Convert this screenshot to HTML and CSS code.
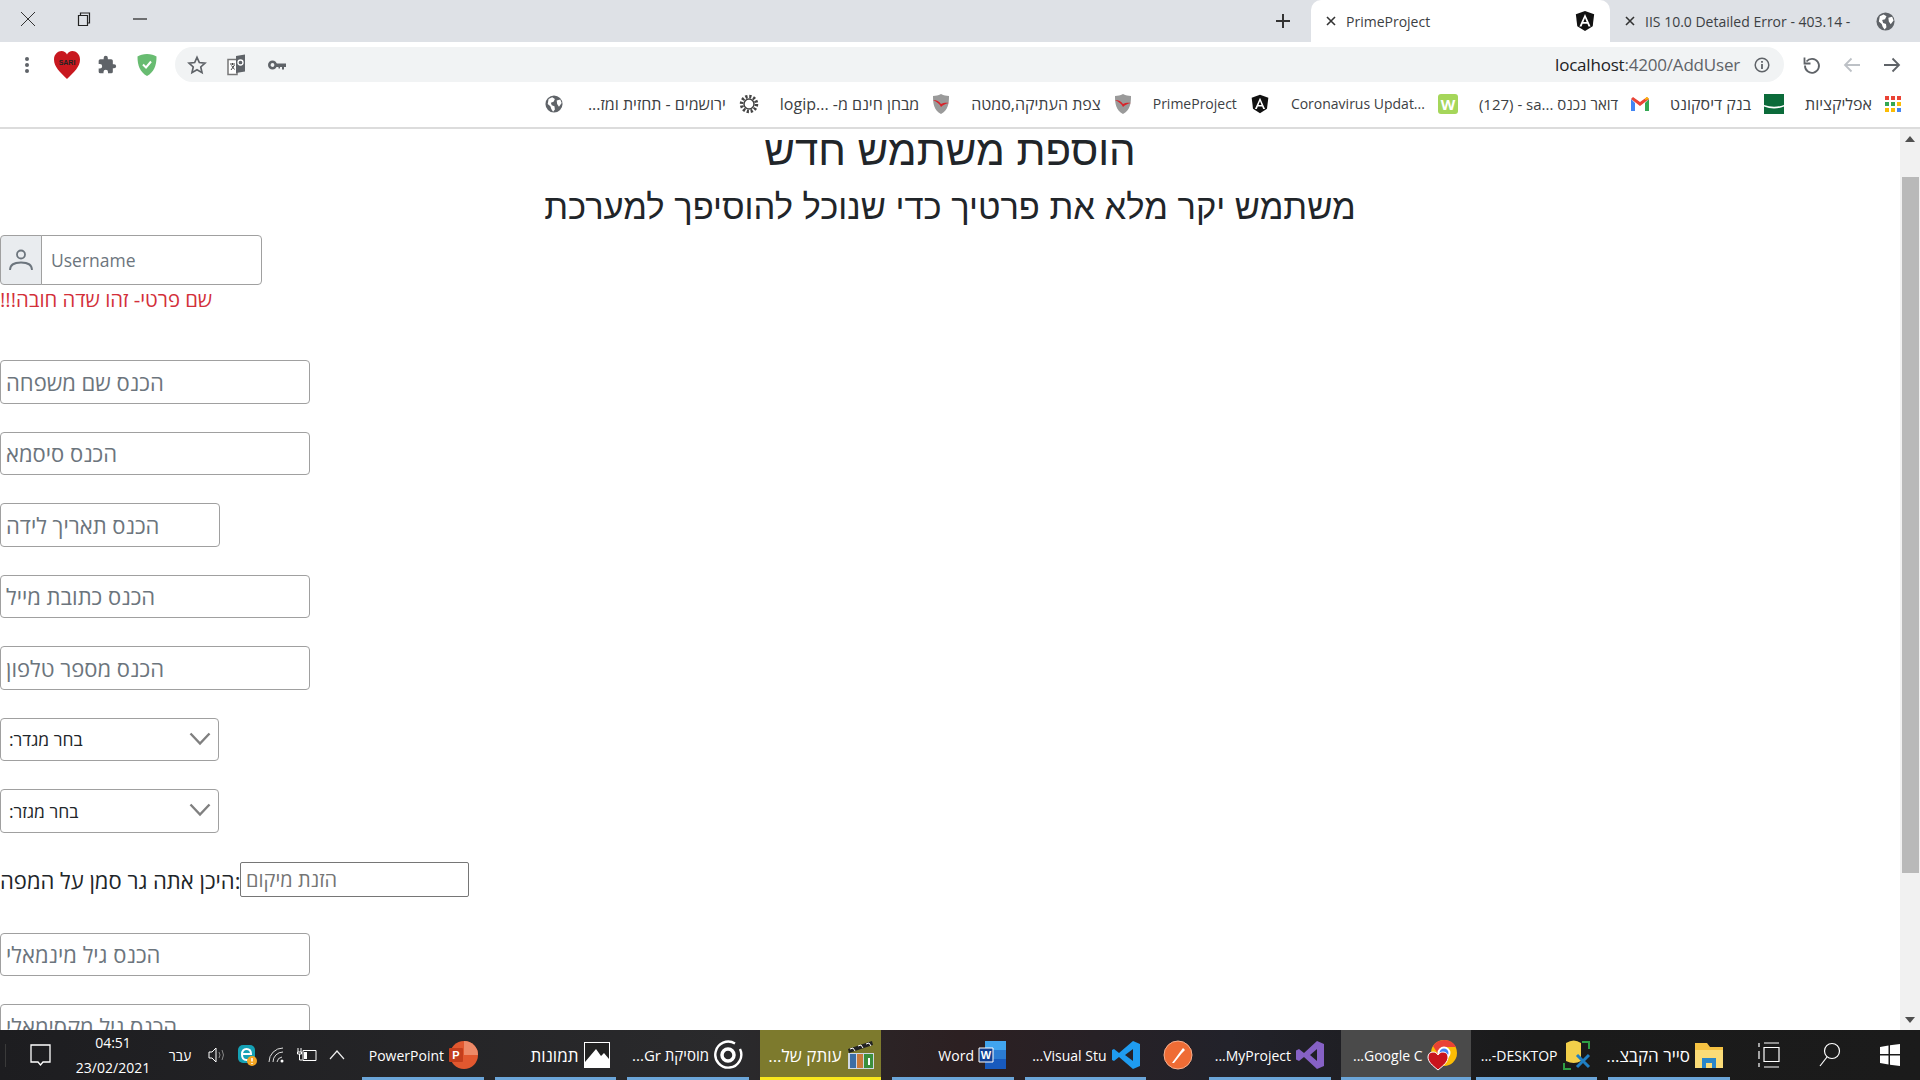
FILE: index.html
```html
<!DOCTYPE html>
<html lang="he">
<head>
<meta charset="utf-8">
<title>PrimeProject</title>
<link rel="stylesheet" href="styles.css">
</head>
<body>
<div class="screen">
  <header class="tabstrip">
    <div class="win-btn"><svg width="16" height="16" viewBox="0 0 16 16"><path d="M1 1l14 14M15 1L1 15" stroke="#333" stroke-width="1" fill="none"/></svg></div>
    <div class="win-btn"><svg width="14" height="16" viewBox="0 0 14 16"><path d="M1.5 4.5h9v10h-9zM3.5 4.5V2h9v10h-2" stroke="#222" stroke-width="1.2" fill="none"/></svg></div>
    <div class="win-btn"><svg width="14" height="2" viewBox="0 0 14 2"><path d="M0 1h14" stroke="#222" stroke-width="1.2"/></svg></div>
    <div class="strip-space"></div>
    <div class="new-tab"><svg width="16" height="16" viewBox="0 0 16 16"><path d="M8 1v14M1 8h14" stroke="#333" stroke-width="2"/></svg></div>
    <div class="tab tab-active">
      <svg class="tab-x" width="10" height="10" viewBox="0 0 10 10"><path d="M1 1l8 8M9 1L1 9" stroke="#333" stroke-width="1.6"/></svg>
      <span class="tab-title">PrimeProject</span>
      <svg class="ng" width="22" height="24" viewBox="0 0 24 24"><path d="M12 1L2 4.6l1.6 13.2L12 23l8.4-5.2L22 4.6z" fill="#111"/><path d="M12 4.4L5.9 18h2.3l1.2-3h5.2l1.2 3h2.3L12 4.4zm1.8 8.8h-3.6L12 8.8z" fill="#fff"/></svg>
    </div>
    <div class="tab tab-other">
      <svg class="tab-x" width="10" height="10" viewBox="0 0 10 10"><path d="M1 1l8 8M9 1L1 9" stroke="#333" stroke-width="1.6"/></svg>
      <span class="tab-title">IIS 10.0 Detailed Error - 403.14 -</span>
      <svg width="19" height="19" viewBox="0 0 20 20"><circle cx="10" cy="10" r="9.5" fill="#5f6368"/><path d="M4 4.5l4-2 3 2-1.500 3-3 1 1 3 3 1 .5 3.500-2 2.500-2-3-1-3-3-2.500zM13 6l4-1 1.500 4-3 4-2-3z" fill="#fff"/></svg>
    </div>
  </header>

  <div class="toolbar">
    <div class="tool"><svg width="6" height="18" viewBox="0 0 6 18"><g fill="#5f6368"><circle cx="3" cy="3" r="2"/><circle cx="3" cy="9" r="2"/><circle cx="3" cy="15" r="2"/></g></svg></div>
    <div class="tool"><svg width="28" height="30" viewBox="0 0 28 30"><path d="M14 29C7 22 1 17 1 9.500 1 4 5 1 8.500 1 11 1 13 2.500 14 4.500 15 2.500 17 1 19.500 1 23 1 27 4 27 9.500 27 17 21 22 14 29z" fill="#c8181f"/><text x="14" y="15" class="heart-txt">SARI</text></svg></div>
    <div class="tool"><svg width="20" height="20" viewBox="0 0 24 24"><path fill="#5f6368" d="M20.500 11H19V7a2 2 0 0 0-2-2h-4V3.500a2.500 2.500 0 0 0-5 0V5H4a2 2 0 0 0-2 2v3.800h1.500a2.700 2.700 0 0 1 0 5.400H2V20a2 2 0 0 0 2 2h3.800v-1.500a2.700 2.700 0 0 1 5.400 0V22H17a2 2 0 0 0 2-2v-4h1.500a2.500 2.500 0 0 0 0-5z"/></svg></div>
    <div class="tool"><svg width="20" height="24" viewBox="0 0 20 24"><path d="M10 1C6 1 3 2 .5 3.500.5 13 3 19 10 23c7-4 9.500-10 9.500-19.500C17 2 14 1 10 1z" fill="#68bc71"/><path d="M6 11.500l3 3 5-6" stroke="#fff" stroke-width="2" fill="none"/></svg></div>
    <div class="omnibox">
      <div class="tool"><svg width="20" height="20" viewBox="0 0 24 24"><path d="M12 2.800l2.800 6.300 6.800.7-5.100 4.600 1.500 6.800-6-3.500-6 3.500 1.500-6.800-5.100-4.600 6.800-.7z" fill="none" stroke="#5f6368" stroke-width="2"/></svg></div>
      <div class="tool"><svg width="20" height="22" viewBox="0 0 20 22"><path d="M1 5.500h9v15H1z" fill="#fff" stroke="#777" stroke-width="1.500"/><path d="M9 2l9-1.500v17L9 19z" fill="#5f6368"/><circle cx="13.500" cy="8.500" r="2.500" fill="none" stroke="#fff" stroke-width="1.300"/><path d="M3 10h5M5.500 9v2M7.500 11l-3.500 5M4.500 11.500l3 4" stroke="#444" stroke-width="1" fill="none"/></svg></div>
      <div class="tool"><svg width="18" height="10" viewBox="0 0 18 10"><circle cx="4.500" cy="5" r="3.200" fill="none" stroke="#5f6368" stroke-width="2.600"/><path d="M8 3.500h10v3.500h-2v2.500h-2V7h-2v1.500h-1.500V7H8z" fill="#5f6368"/></svg></div>
      <div class="omni-space"></div>
      <span class="url"><span class="url-host">localhost</span>:4200/AddUser</span>
      <div class="info"><svg width="16" height="16" viewBox="0 0 16 16"><circle cx="8" cy="8" r="6.800" fill="none" stroke="#5f6368" stroke-width="1.500"/><path d="M8 7v5M8 4v1.700" stroke="#5f6368" stroke-width="1.800"/></svg></div>
    </div>
    <div class="tool"><svg width="20" height="20" viewBox="0 0 20 20"><path d="M4.500 6.500A7 7 0 1 1 3 10.500" fill="none" stroke="#5f6368" stroke-width="1.800"/><path d="M2.500 2.500v6h6" fill="none" stroke="#5f6368" stroke-width="1.800"/></svg></div>
    <div class="tool"><svg width="18" height="16" viewBox="0 0 18 16"><path d="M17 8H2M8.500 1.500L2 8l6.500 6.500" fill="none" stroke="#bdc1c6" stroke-width="1.800"/></svg></div>
    <div class="tool"><svg width="18" height="16" viewBox="0 0 18 16"><path d="M1 8h15M9.500 1.500L16 8l-6.500 6.500" fill="none" stroke="#5f6368" stroke-width="1.800"/></svg></div>
  </div>

  <nav class="bookmarks">
    <div class="bm bm-globe"><svg width="18" height="18" viewBox="0 0 20 20"><circle cx="10" cy="10" r="9.5" fill="#5f6368"/><path d="M4 4.500l4-2 3 2-1.500 3-3 1 1 3 3 1 .5 3.500-2 2.500-2-3-1-3-3-2.500zM13 6l4-1 1.500 4-3 4-2-3z" fill="#fff"/></svg></div>
    <div class="bm"><span class="bm-text bm-he" dir="rtl">ירושמים - תחזית ומז...</span><svg width="20" height="20" viewBox="0 0 20 20"><circle cx="10" cy="10" r="5" fill="none" stroke="#444" stroke-width="1.500"/><circle cx="10" cy="10" r="7.500" fill="none" stroke="#444" stroke-width="3.500" stroke-dasharray="2.200 1.730"/></svg></div>
    <div class="bm"><span class="bm-text bm-he" dir="rtl">מבחן חינם מ- ...logip</span><svg width="18" height="22" viewBox="0 0 18 22"><path d="M9 1c3 1.500 5 1.500 8 2 0 8-1 14-8 18C2 17 1 11 1 3c3-.5 5-.5 8-2z" fill="#9a9a9a"/><path d="M1 7c4 0 6 1.500 8 4 2-1 5-1.500 8-1-3 .500-6 2-8 4-1-3-4-5-8-7z" fill="#d8232a"/></svg></div>
    <div class="bm"><span class="bm-text bm-he" dir="rtl">צפת העתיקה,סמטה</span><svg width="18" height="22" viewBox="0 0 18 22"><path d="M9 1c3 1.500 5 1.500 8 2 0 8-1 14-8 18C2 17 1 11 1 3c3-.5 5-.5 8-2z" fill="#9a9a9a"/><path d="M1 7c4 0 6 1.500 8 4 2-1 5-1.500 8-1-3 .500-6 2-8 4-1-3-4-5-8-7z" fill="#d8232a"/></svg></div>
    <div class="bm"><span class="bm-text">PrimeProject</span><svg width="20" height="22" viewBox="0 0 24 24"><path d="M12 1L2 4.600l1.600 13.200L12 23l8.400-5.200L22 4.600z" fill="#111"/><path d="M12 4.400L5.900 18h2.300l1.200-3h5.200l1.200 3h2.300L12 4.400zm1.800 8.800h-3.600L12 8.800z" fill="#fff"/></svg></div>
    <div class="bm"><span class="bm-text">Coronavirus Updat...</span><span class="bm-w">W</span></div>
    <div class="bm"><span class="bm-text bm-mixed">(127) - sa... דואר נכנס</span><svg width="18" height="14" viewBox="0 0 18 14"><path d="M0 2v12h4V6z" fill="#4285f4"/><path d="M14 6v8h4V2z" fill="#34a853"/><path d="M0 2l9 7 9-7-2-2-7 5-7-5z" fill="#ea4335"/><path d="M14 3l4-1-2-2-2 1.500z" fill="#fbbc05"/></svg></div>
    <div class="bm"><span class="bm-text bm-he" dir="rtl">בנק דיסקונט</span><svg width="20" height="20" viewBox="0 0 20 20"><path d="M0 0h20v20H0z" fill="#0b6b3a"/><path d="M0 11q10 3.500 20 0v1.500q-10 4-20 0z" fill="#fff"/></svg></div>
    <div class="bm"><span class="bm-text bm-he" dir="rtl">אפליקציות</span><svg width="16" height="16" viewBox="0 0 16 16"><path fill="#ea4335" d="M0 0h4v4H0zM6 0h4v4H6zM12 0h4v4h-4z"/><path fill="#fbbc05" d="M12 6h4v4h-4zM0 12h4v4H0zM6 12h4v4H6z"/><path fill="#34a853" d="M0 6h4v4H0zM6 6h4v4H6z"/><path fill="#4285f4" d="M12 12h4v4h-4z"/></svg></div>
  </nav>

  <div class="viewport">
    <main class="page">
      <h1 class="page-title">הוספת משתמש חדש</h1>
      <h2 class="page-sub">משתמש יקר מלא את פרטיך כדי שנוכל להוסיפך למערכת</h2>
      <form class="form">
        <div class="first-block">
          <div class="input-group">
            <span class="group-icon"><svg width="24" height="24" viewBox="0 0 24 24"><circle cx="12" cy="6.500" r="4" fill="none" stroke="#6c757d" stroke-width="1.800"/><path d="M1 22c0-5.500 5-7.500 11-7.500S23 16.500 23 22" fill="none" stroke="#6c757d" stroke-width="1.800"/></svg></span>
            <input class="group-input" type="text" placeholder="Username">
          </div>
          <div class="error">שם פרטי- זהו שדה חובה!!!</div>
        </div>
        <input class="control" type="text" placeholder="הכנס שם משפחה">
        <input class="control" type="text" placeholder="הכנס סיסמא">
        <input class="control control-short" type="text" placeholder="הכנס תאריך לידה">
        <input class="control" type="text" placeholder="הכנס כתובת מייל">
        <input class="control" type="text" placeholder="הכנס מספר טלפון">
        <div class="select-wrap">
          <select class="select"><option>בחר מגדר:</option></select>
          <svg class="chevron" width="22" height="14" viewBox="0 0 22 14"><path d="M1.500 1.500L11 11.500l9.500-10" fill="none" stroke="#808080" stroke-width="2.400"/></svg>
        </div>
        <div class="select-wrap">
          <select class="select"><option>בחר מגזר:</option></select>
          <svg class="chevron" width="22" height="14" viewBox="0 0 22 14"><path d="M1.500 1.500L11 11.500l9.500-10" fill="none" stroke="#808080" stroke-width="2.400"/></svg>
        </div>
        <div class="location-row">
          <label class="location-label">היכן אתה גר סמן על המפה:</label>
          <input class="location" type="text" placeholder="הזנת מיקום">
        </div>
        <input class="control" type="text" placeholder="הכנס גיל מינמאלי">
        <input class="control" type="text" placeholder="הכנס גיל מקסימאלי">
      </form>
    </main>
    <aside class="scrollbar">
      <svg class="arrow" width="10" height="6" viewBox="0 0 10 6"><path d="M5 0l5 6H0z" fill="#505050"/></svg>
      <div class="thumb"></div>
      <svg class="arrow" width="10" height="6" viewBox="0 0 10 6"><path d="M5 6l5-6H0z" fill="#505050"/></svg>
    </aside>
  </div>

  <footer class="taskbar">
    <div class="tray">
      <div class="notify"><svg width="21" height="23" viewBox="0 0 21 23"><path d="M1 1h19v17h-7l-2.500 3-2.500-3H1z" fill="none" stroke="#fff" stroke-width="1.300"/></svg></div>
      <div class="clock"><span>04:51</span><span>23/02/2021</span></div>
      <div class="lang">עבר</div>
      <div class="tray-icons">
        <svg width="20" height="20" viewBox="0 0 20 20"><path d="M2 7h3l4-4v14l-4-4H2z" fill="none" stroke="#fff"/><path d="M12 7q2 3 0 6M15 5q3 5 0 10" fill="none" stroke="#888"/></svg>
        <svg width="20" height="22" viewBox="0 0 20 22"><rect x="1" y="1" width="17" height="18" rx="5" fill="#15a1b5"/><path d="M5 10h9q0-5-4.500-5T5 10.500 9.500 16 14 14" fill="none" stroke="#fff" stroke-width="2"/><circle cx="15" cy="17" r="5" fill="#f5a623"/><path d="M15 14v3.500M15 19v1" stroke="#fff" stroke-width="1.500"/></svg>
        <svg width="20" height="18" viewBox="0 0 20 18"><path d="M2 16A14 14 0 0 1 16 2M6 16a10 10 0 0 1 10-10M10 16a6 6 0 0 1 5-5" fill="none" stroke="#ddd"/><circle cx="15" cy="15" r="1.500" fill="#fff"/></svg>
        <svg width="20" height="16" viewBox="0 0 20 16"><path d="M6 3.500h13v10H6z" fill="none" stroke="#fff"/><path d="M1 1v4M4 1v4M.500 5h4v2h-4zM2.500 7v6h3" stroke="#fff" fill="none"/><path d="M7 5h3v7H7z" fill="#fff"/></svg>
        <svg width="20" height="12" viewBox="0 0 20 12"><path d="M3 10l7-8 7 8" fill="none" stroke="#eee" stroke-width="1.200"/></svg>
      </div>
    </div>
    <div class="task-list">
      <div class="task open"><span>PowerPoint</span><svg width="30" height="30" viewBox="0 0 30 30"><circle cx="16" cy="15" r="14" fill="#e2582f"/><path d="M16 1a14 14 0 0 1 14 14H16z" fill="#ee8a68"/><rect x="1" y="8" width="14" height="14" rx="1" fill="#c43e1c"/><text x="8" y="19" class="ico-letter">P</text></svg></div>
      <div class="task open"><span class="task-he">תמונות</span><svg width="28" height="28" viewBox="0 0 28 28"><path d="M1 1h26v26H1z" fill="#fff"/><path d="M2 2h24v16l-5-6-3 3-5-7-11 13z" fill="#222"/></svg></div>
      <div class="task open"><span class="task-mixed">...Gr מוסיקת</span><svg width="30" height="30" viewBox="0 0 30 30"><path d="M22 3.500A13 13 0 1 0 27 9" fill="none" stroke="#fff" stroke-width="2.400"/><circle cx="15" cy="15" r="6" fill="none" stroke="#fff" stroke-width="3.500"/></svg></div>
      <div class="task open task-flash"><span class="task-he">...עותק של</span><svg width="30" height="32" viewBox="0 0 30 32"><path d="M2 10L26 2l1 4L3 14z" fill="#222"/><path d="M4 10l3-1 2 3M12 7l3-1 2 3M20 5l3-1 2 3" stroke="#fff" fill="none"/><path d="M2 14h26v16H2z" fill="#cfd8e3"/><path d="M4 15h6v14H4z" fill="#3b6ea5"/><path d="M11 15h6v14h-6z" fill="#c97a3a"/><path d="M18 15h9v14h-9z" fill="#3c8f3c"/><path d="M22 19h2v7h-2z" fill="#fff"/></svg></div>
      <div class="task open"><span>Word</span><svg width="30" height="30" viewBox="0 0 30 30"><path d="M7 1h21v28H7z" fill="#185abd"/><path d="M7 1h21v9H7z" fill="#41a5ee"/><path d="M7 10h21v9H7z" fill="#2b7cd3"/><path d="M1 8h14v14H1z" fill="#103f91" stroke="#fff" stroke-width="1"/><text x="8" y="19" class="ico-letter">W</text></svg></div>
      <div class="task open"><span>...Visual Stu</span><svg width="30" height="30" viewBox="0 0 30 30"><path d="M22 1l7 3v22l-7 3L8 17l-5 4-2-1v-10l2-1 5 4zM22 9l-8 6 8 6z" fill="#1f9cf0"/></svg></div>
      <div class="task task-icon-only"><svg width="30" height="30" viewBox="0 0 30 30"><circle cx="15" cy="15" r="14" fill="#ef6c35" stroke="#f7b08f"/><path d="M9 23l8-11 3-4 2 2-3 3-8 10z" fill="#fff"/></svg></div>
      <div class="task open"><span>...MyProject</span><svg width="30" height="30" viewBox="0 0 30 30"><path d="M22 1l7 3v22l-7 3L9 17l-5 4-3-1.500v-9L4 9l5 4zM22 9l-7 6 7 6z" fill="#8661c5"/></svg></div>
      <div class="task open task-active"><span>...Google C</span><svg width="32" height="32" viewBox="0 0 32 32"><circle cx="17" cy="14" r="13" fill="#fbbc05"/><path d="M17 1a13 13 0 0 0-11 6l5 8 6-7h12a13 13 0 0 0-12-7z" fill="#ea4335"/><circle cx="17" cy="14" r="5.500" fill="#4285f4" stroke="#fff" stroke-width="2"/><path d="M11 31C5 26 1 23 1 18c0-3 2-5 5-5 2 0 4 1 5 3 1-2 3-3 5-3 3 0 5 2 5 5 0 5-4 8-10 13z" fill="#c8141c" stroke="#fff"/></svg></div>
      <div class="task open"><span>...-DESKTOP</span><svg width="30" height="32" viewBox="0 0 30 32"><path d="M4 4q8-5 15 0v18q-7 4-15 0z" fill="#f2cf4a"/><path d="M20 3h7v7M2 24v6h7" fill="none" stroke="#2f9e44" stroke-width="2"/><path d="M15 28l12-12M15 16l12 12" stroke="#1f7fc4" stroke-width="3"/></svg></div>
      <div class="task open"><span class="task-he">...סייר הקבצ</span><svg width="30" height="30" viewBox="0 0 30 30"><path d="M1 3h12l3 4h13v21H1z" fill="#f5c242"/><path d="M1 10h28v18H1z" fill="#fbdc78"/><path d="M8 18h14v10h-4v-5h-6v5H8z" fill="#2a86c9"/></svg></div>
    </div>
    <div class="sys">
      <svg width="22" height="26" viewBox="0 0 22 26"><path d="M6 5.500h15v14H6zM1 1v4M1 9v8M1 21v4M6 1h15M6 25h15" fill="none" stroke="#fff" stroke-width="1.200"/></svg>
      <svg width="22" height="26" viewBox="0 0 22 26"><circle cx="13" cy="9" r="7.500" fill="none" stroke="#fff" stroke-width="1.200"/><path d="M8 15L1 24" stroke="#fff" stroke-width="1.200"/></svg>
      <svg width="20" height="22" viewBox="0 0 20 22"><path d="M0 3l8.500-1.500V10H0zM10 1.200L20 0v10H10zM0 11.500h8.500v9L0 19zM10 11.500h10V22l-10-1.300z" fill="#fff"/></svg>
    </div>
  </footer>
</div>
</body>
</html>
```

FILE: styles.css
```css
* { box-sizing: border-box; }
html, body { margin: 0; height: 100%; overflow: hidden; }
body { font-family: "Open Sans", "Liberation Sans", sans-serif; color: #212529; background: #fff; }
.screen { display: flex; flex-direction: column; height: 1080px; width: 1920px; overflow: hidden; }

/* tab strip */
.tabstrip { display: flex; align-items: stretch; height: 42px; background: #dee1e6; flex: none; }
.win-btn { width: 56px; display: flex; align-items: center; justify-content: center; margin-bottom: 4px; }
.strip-space { flex: 1; }
.new-tab { width: 28px; display: flex; align-items: center; justify-content: center; margin-right: 14px; }
.tab { display: flex; align-items: center; font-size: 14px; color: #3c4043; }
.tab-active { width: 299px; background: #fff; border-radius: 10px 10px 0 0; padding: 0 14px 0 15px; }
.tab-other { width: 310px; padding: 0 25px 0 15px; }
.tab-x { flex: none; margin-right: 10px; }
.tab-title { flex: 1; white-space: nowrap; }
.ng { flex: none; }

/* toolbar */
.toolbar { display: flex; align-items: center; height: 40px; padding: 5px 8px 0 7px; background: #fff; flex: none; }
.tool { width: 40px; display: flex; align-items: center; justify-content: center; flex: none; }
.heart-txt { font: bold 7px "Liberation Sans", sans-serif; fill: #222; text-anchor: middle; }
.omnibox { flex: 1; display: flex; align-items: center; height: 35px; margin: 0 8px; padding: 0 10px 0 2px; background: #f1f3f4; border-radius: 18px; }
.omni-space { flex: 1; }
.url { font-size: 17px; color: #5f6368; letter-spacing: -0.2px; }
.url-host { color: #202124; }
.info { width: 24px; margin-left: 10px; display: flex; justify-content: center; }

/* bookmarks */
.bookmarks { display: flex; align-items: center; justify-content: flex-end; gap: 21px; height: 47px; padding: 0 19px 2px 0; background: #fff; border-bottom: 2px solid #dcdcdc; flex: none; }
.bm { display: flex; align-items: center; gap: 13px; }
.bm-globe { margin-right: 4px; }
.bm-text { font-size: 14px; color: #3c4043; white-space: nowrap; }
.bm-he { font-size: 16px; }
.bm-mixed { font-size: 15px; }
.bm-w { width: 20px; height: 20px; background: #a5d65a; color: #fff; border-radius: 3px; font-size: 15px; font-weight: 700; line-height: 20px; text-align: center; }

/* page */
.viewport { flex: 1; min-height: 0; display: flex; }
.page { flex: 1; min-width: 0; }
.page-title { margin: 0; font: 400 42px/44px "Liberation Sans", sans-serif; text-align: center; color: #212529; }
.page-sub { margin: 13.5px 0 0; font: 400 34.5px/41px "Liberation Sans", sans-serif; text-align: center; color: #212529; }
.form { display: flex; flex-direction: column; align-items: flex-start; gap: 28px; margin-top: 7.5px; }
.first-block { margin-bottom: 21px; }
.input-group { display: flex; width: 262px; height: 50px; }
.group-icon { width: 42px; display: flex; align-items: center; justify-content: center; background: #e9ecef; border: 1px solid #a0a0a0; border-radius: 4px 0 0 4px; }
.group-input { flex: 1; min-width: 0; margin-left: -1px; padding: 0 9px; border: 1px solid #a0a0a0; border-radius: 0 4px 4px 0; font: 17.500px "Open Sans", sans-serif; outline: 0; }
.group-input::placeholder, .control::placeholder { color: #6c757d; opacity: 1; }
.error { width: fit-content; direction: rtl; margin-top: 2px; font-size: 20.300px; line-height: 24px; color: #d32f3a; }
.control { width: 310px; height: 43.5px; padding: 0 5px; border: 1px solid #a0a0a0; border-radius: 4px; font: 22px "Open Sans", "Liberation Sans", sans-serif; }
.control-short { width: 220px; }
.select-wrap { position: relative; width: 219px; height: 43.5px; }
.select { width: 100%; height: 100%; padding: 0 8px; appearance: none; -webkit-appearance: none; background: #fff; border: 1px solid #a0a0a0; border-radius: 4px; font: 17.500px "Open Sans", "Liberation Sans", sans-serif; color: #212529; direction: rtl; text-align: left; }
.chevron { position: absolute; right: 8px; top: 14px; pointer-events: none; }
.location-row { display: flex; align-items: center; height: 38px; margin-bottom: 6px; }
.location-label { font-size: 22px; white-space: nowrap; width: 240px; }
.location { width: 229px; height: 35px; padding: 0 5px; border: 1px solid #767676; border-radius: 2px; font: 20px "Open Sans", "Liberation Sans", sans-serif; }
.location::placeholder { color: #757575; }
.scrollbar { width: 20px; flex: none; background: #f1f1f1; display: flex; flex-direction: column; align-items: center; }
.arrow { flex: none; margin: 7px 0; }
.thumb { flex: none; width: 17px; height: 696px; margin: 28px 0 auto; background: #b9b9b9; }

/* taskbar */
.taskbar { position: relative; z-index: 1; display: flex; align-items: stretch; height: 50px; flex: none; color: #fff; font-size: 14px; background: linear-gradient(90deg, #1d1d20 0%, #2a2a2c 38%, #2c2022 50%, #22222a 64%, #1a1a1a 80%, #1b1b1b 100%); }
.tray { display: flex; align-items: center; width: 362px; flex: none; }
.notify { width: 70px; margin-left: 5px; display: flex; justify-content: center; border-left: 1px solid #3a3a3a; }
.clock { width: 88px; margin-left: -6px; margin-right: 6px; display: flex; flex-direction: column; align-items: center; line-height: 25px; }
.lang { width: 34px; text-align: center; }
.tray-icons { display: flex; align-items: center; gap: 10px; margin-left: 10px; }
.task-list { display: flex; gap: 11px; flex: none; }
.task { position: relative; width: 121.500px; display: flex; align-items: center; justify-content: flex-end; gap: 4px; padding-right: 5.500px; white-space: nowrap; flex: none; }
.task-he { font-size: 17px; }
.task-mixed { font-size: 15px; }
.task svg { flex: none; }
.task.open::after { content: ""; position: absolute; left: 0; right: 0; bottom: 0; height: 3px; background: #6ba5d8; }
.task-flash { background: #7d7a2d; }
.task-flash.open::after { background: #f8e71c; }
.task-active { width: 130px; margin: 0 -6px 0 -1px; padding-right: 12px; background: #4a4a4a; }
.task-icon-only { width: 41px; justify-content: center; padding: 0; }
.ico-letter { font: bold 11px "Liberation Sans", sans-serif; fill: #fff; text-anchor: middle; }
.sys { flex: 1; display: flex; align-items: center; gap: 39px; padding-left: 28px; }
```
